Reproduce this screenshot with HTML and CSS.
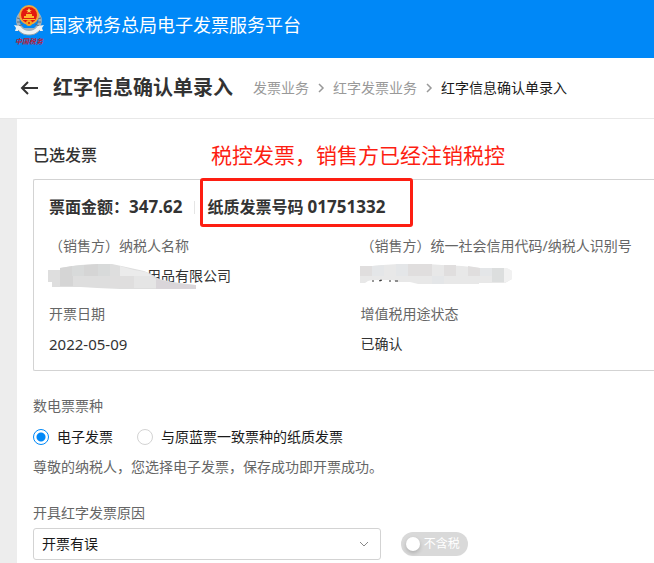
FILE: index.html
```html
<!DOCTYPE html>
<html lang="zh-CN">
    <head>
        <meta charset="utf-8">
        <title>红字信息确认单录入</title>
        <link rel="stylesheet" href="styles.css">
    </head>
    <body>
        <header class="topbar">
            <svg class="logo" viewBox="0 0 30 42" aria-hidden="true">
                <path d="M6 8C1 12 1 20 5 24l5 4h10l5-4c4-4 4-12-1-16l-1 3c3 5 1 10-3 13H10C6 21 4 16 7 11z" fill="#9fb0bd" />
                <path d="M3 14l4 1M3 18l4 0M5 22l4-2M27 14l-4 1M27 18l-4 0M25 22l-4-2" stroke="#5d6c7a" stroke-width="1" />
                <circle cx="15" cy="11" r="10" fill="#f3a63c" />
                <circle cx="15" cy="11" r="8" fill="#e3190f" />
                <path d="M15 4l1 2h2l-2 1 1 2-2-1-2 1 1-2-2-1h2z" fill="#ffd65a" />
                <path d="M10 14h10v-2h-2v-2h-6v2h-2zM9 15h12v1H9z" fill="#ffb52e" />
                <circle cx="15" cy="19" r="3" fill="#f6a51f" />
                <circle cx="15" cy="19" r="1" fill="#d91a12" />
                <path d="M0 21l6 1c3 4 6 5 9 5s6-1 9-5l6-1-2 3 1 3-4 0c-3 3-6 4-10 4s-7-1-10-4l-4 0 1-3z" fill="#eef1f2" />
                <path d="M4 26c4 4 7 5 11 5s7-1 11-5" fill="none" stroke="#8e9aa2" stroke-width="1" />
                <text x="1" y="40" class="logo-text">中国税务</text>
            </svg>
            <span class="brand">国家税务总局电子发票服务平台</span>
        </header>

        <div class="page-head">
            <button class="back-btn" type="button" aria-label="返回">
                <svg viewBox="0 0 20 20" aria-hidden="true">
                    <path d="M8 4L2 10l6 6M2 10h16" />
                </svg>
            </button>
            <h1>红字信息确认单录入</h1>
            <nav class="breadcrumb">
                <a href="#">发票业务</a>
                <svg viewBox="0 0 8 10" aria-hidden="true"><path d="M2 1l4 4-4 4" /></svg>
                <a href="#">红字发票业务</a>
                <svg viewBox="0 0 8 10" aria-hidden="true"><path d="M2 1l4 4-4 4" /></svg>
                <span class="current">红字信息确认单录入</span>
            </nav>
        </div>

        <main class="content">
            <div class="section-head">
                <h2>已选发票</h2>
                <p class="note">税控发票，销售方已经注销税控</p>
            </div>

            <section class="card">
                <div class="card-head">
                    <span>票面金额：<span class="num">347.62</span></span>
                    <span class="invoice-no">纸质发票号码 <span class="num">01751332</span></span>
                </div>
                <dl class="fields">
                    <div class="field">
                        <dt>（销售方）纳税人名称</dt>
                        <dd class="company">
                            用品有限公司
                            <svg class="mask" viewBox="0 0 148 26" aria-hidden="true">
                                <path d="M0 6h12V4l20-3 18-1h14l14 3 18 4 7 3 8 5 14 3 22 3v4H72l-23-1-16-1H4v-5H0z" fill="#dedede" />
                                <path d="M12 4l12-2v10H12zM12 12h13v10H12zM36 1l14-1v12H36z" fill="#d5d5d5" />
                                <path d="M24 2l12-1v11H24zM50 0h12v12H50z" fill="#d8dada" />
                                <path d="M72 2l14 4v6H72zM86 6l12 2 6 4H86z" fill="#ebebeb" />
                                <path d="M62 12h24v12H62z" fill="#dfdede" />
                                <path d="M86 12h18l4 3v9H86z" fill="#e5e5e5" />
                                <path d="M108 15l8 2 14 3 18 1v4h-40z" fill="#d9d5d9" />
                            </svg>
                        </dd>
                    </div>
                    <div class="field">
                        <dt>（销售方）统一社会信用代码/纳税人识别号</dt>
                        <dd class="tax-id">
                            <svg class="mask" viewBox="0 0 152 20" aria-hidden="true">
                                <path d="M0 2h13l10-1 15-1h30l14 1 20 1 18 2h26l6 3v8l-7 4H119v1H58l-8-2H36l-3-2H12l-4 1-3 2H0z" fill="#e8e8e8" />
                                <path d="M0 2h12v10H0zM48 0h24v12H48zM84 1h12v11H84zM108 2l12 2v8h-12z" fill="#e0dede" />
                                <path d="M12 2l12-1v11H12zM36 0h12v12H36zM120 4h12v8h-12zM72 12h12v8H72z" fill="#e4e6e8" />
                                <path d="M132 4h12v14h-12z" fill="#dcdede" />
                                <path d="M144 4h3l5 3v8l-8 4z" fill="#f1f1f1" />
                                <path d="M12 17h2M19 17l2-1M22 16l-2 1M29 17h2M35 17h3" stroke="#333" />
                            </svg>
                        </dd>
                    </div>
                    <div class="field">
                        <dt>开票日期</dt>
                        <dd class="date">2022-05-09</dd>
                    </div>
                    <div class="field">
                        <dt>增值税用途状态</dt>
                        <dd>已确认</dd>
                    </div>
                </dl>
            </section>

            <form class="form">
                <fieldset>
                    <legend>数电票票种</legend>
                    <div class="radios">
                        <label><input type="radio" name="kind" checked>电子发票</label>
                        <label><input type="radio" name="kind">与原蓝票一致票种的纸质发票</label>
                    </div>
                    <p class="hint">尊敬的纳税人，您选择电子发票，保存成功即开票成功。</p>
                </fieldset>

                <label class="form-label" for="reason">开具红字发票原因</label>
                <div class="reason-row">
                    <div class="select-wrap">
                        <select id="reason">
                            <option>开票有误</option>
                        </select>
                        <svg viewBox="0 0 10 6" aria-hidden="true"><path d="M1 1l4 4 4-4" /></svg>
                    </div>
                    <label class="switch"><input type="checkbox" role="switch">不含税</label>
                </div>
            </form>
        </main>
    </body>
</html>
```
FILE: styles.css
```css
:root {
    --blue: #0088f7;
    --text: #333;
    --text-label: #666;
    --text-muted: #999;
    --border: #d3d3d3;
    --red: #fd1e12;
}

* {
    box-sizing: border-box;
}

body {
    margin: 0;
    min-height: 100vh;
    display: flex;
    flex-direction: column;
    background-color: #ededed;
    color: var(--text);
    font-family: "Noto Sans", "Noto Sans CJK SC", sans-serif;
    font-size: 14px;
    line-height: 22px;
    overflow-x: hidden;
}

h1, h2, p, dl, dd {
    margin: 0;
}

.topbar {
    display: flex;
    align-items: center;
    gap: 5px;
    height: 58px;
    padding: 0 14px 8px;
    background-color: var(--blue);
    color: #fff;
}

.logo {
    width: 30px;
    height: 42px;
}

.logo-text {
    font-size: 7px;
    font-weight: bold;
    font-style: italic;
    fill: #b3203a;
}

.brand {
    font-size: 18px;
    white-space: nowrap;
}

/* Title and breadcrumb */
.page-head {
    display: flex;
    align-items: center;
    height: 61px;
    padding: 0 20px;
    background-color: #fff;
    border-bottom: 1px solid #e8e8e8;
    white-space: nowrap;
}

.back-btn {
    width: 20px;
    height: 20px;
    margin-right: 13px;
    padding: 0;
    border: none;
    background: none;
    cursor: pointer;
}

.back-btn svg {
    display: block;
    fill: none;
    stroke: var(--text);
    stroke-width: 2;
}

h1 {
    margin-right: 20px;
    font-size: 20px;
}

.breadcrumb {
    display: flex;
    align-items: center;
    gap: 8px;
    color: var(--text-muted);
}

.breadcrumb a {
    color: inherit;
    text-decoration: none;
}

.breadcrumb svg {
    width: 8px;
    height: 10px;
    fill: none;
    stroke: var(--text-muted);
    stroke-width: 1.5;
}

.breadcrumb .current {
    color: #1a1a1a;
}

.content {
    flex: 1;
    margin-left: 17px;
    padding: 24px 0 0 16px;
    background-color: #fff;
}

.section-head {
    display: flex;
    align-items: center;
    gap: 114px;
    height: 24px;
    margin-bottom: 12px;
    white-space: nowrap;
}

h2 {
    font-size: 16px;
    font-weight: 500;
}

.note {
    color: var(--red);
    font-size: 21px;
}

/* Selected invoice */
.card {
    padding: 15px 0 15px 15px;
    border: 1px solid var(--border);
    border-right: none;
    border-radius: 2px 0 0 2px;
}

.card-head {
    display: flex;
    align-items: center;
    height: 24px;
    margin-bottom: 16px;
    font-size: 16px;
    font-weight: bold;
    white-space: nowrap;
}

.num {
    font-size: 17px;
}

.invoice-no {
    position: relative;
    margin-left: 12px;
    padding-left: 13px;
}

.invoice-no::before {
    content: "";
    position: absolute;
    left: 0;
    top: 5px;
    width: 1px;
    height: 13px;
    background-color: #e5e5e5;
}

/* Red frame around the invoice number */
.invoice-no::after {
    content: "";
    position: absolute;
    inset: -18px -28px -9px 6px;
    border: 3px solid var(--red);
    border-radius: 3px;
}

.fields {
    display: grid;
    grid-template-columns: 1fr 1fr;
    gap: 16px 18px;
}

.field {
    display: flex;
    flex-direction: column;
    gap: 8px;
    white-space: nowrap;
}

dt {
    color: var(--text-label);
}

dd {
    position: relative;
    height: 22px;
}

.company {
    padding-left: 98px;
}

.date {
    font-size: 15px;
}

.mask {
    position: absolute;
    left: -1px;
    top: -1px;
}

.company .mask {
    width: 148px;
}

.tax-id .mask {
    width: 152px;
}

/* Invoice options */
.form {
    margin-top: 24px;
}

fieldset {
    margin: 0 0 24px;
    padding: 0;
    border: none;
}

legend {
    padding: 0;
    color: var(--text-label);
}

.radios {
    display: flex;
    gap: 24px;
    height: 24px;
    margin: 8px 0 7px;
    color: #1a1a1a;
}

.radios label {
    display: flex;
    align-items: center;
    gap: 8px;
}

.radios input {
    appearance: none;
    width: 16px;
    height: 16px;
    margin: 0;
    border: 1px solid var(--border);
    border-radius: 50%;
}

.radios input:checked {
    border-color: var(--blue);
    background: radial-gradient(circle, var(--blue) 4px, transparent 5px);
}

.hint,
.form-label {
    color: var(--text-label);
}

.form-label {
    display: block;
    margin-bottom: 4px;
}

.reason-row {
    display: flex;
    align-items: center;
    gap: 20px;
}

.select-wrap {
    position: relative;
    flex: 0 1 56%;
}

.select-wrap svg {
    position: absolute;
    right: 12px;
    top: 13px;
    width: 10px;
    height: 6px;
    fill: none;
    stroke: #888;
    pointer-events: none;
}

select {
    appearance: none;
    display: block;
    width: 100%;
    height: 32px;
    padding: 0 8px;
    border: 1px solid var(--border);
    border-radius: 3px;
    background-color: #fff;
    color: #1a1a1a;
    font: inherit;
}

.switch {
    display: flex;
    align-items: center;
    gap: 4px;
    height: 24px;
    padding: 0 8px 0 5px;
    border-radius: 12px;
    background-color: #d9d9d9;
    color: #fff;
    font-size: 12px;
}

.switch input {
    appearance: none;
    width: 14px;
    height: 14px;
    margin: 0;
    border-radius: 50%;
    background-color: #fff;
    box-shadow: 0 2px 4px rgba(0, 0, 0, 0.2);
}
```
